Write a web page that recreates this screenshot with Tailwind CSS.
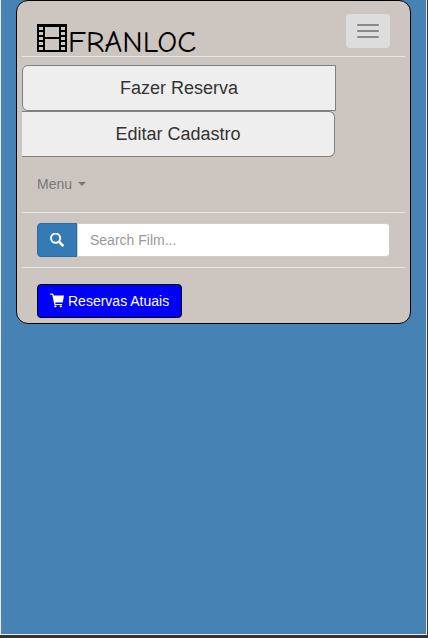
<!DOCTYPE html>
<html lang="pt">
<head>
<meta charset="utf-8">
<meta name="viewport" content="width=device-width, initial-scale=1">
<title>Franloc</title>
<script src="https://cdn.jsdelivr.net/npm/@tailwindcss/browser@4"></script>
</head>
<body class="flex min-h-screen flex-col bg-[#333333] pb-[3px] pr-px font-['Liberation_Sans',Arial,sans-serif] text-sm leading-5 text-[#333]">
<main class="flex-1 border border-t-0 border-[#f0ebe8] bg-[#4682b4] px-[15px]">
  <nav class="rounded-xl border border-black bg-[#cdc5bf] px-[5px] pb-[5px]">
    <div class="flex h-[55px] items-start justify-between px-[15px] pt-[13px]">
      <a href="#" class="flex items-start gap-px pt-2.5 text-black">
        <svg class="h-7 w-[30px]" viewBox="0 0 30 28" aria-hidden="true">
          <path fill="currentColor" fill-rule="evenodd" d="M0 0h30v28H0zM2 3v3h4V3zM2 8v3h4V8zM2 13v3h4v-3zM2 18v3h4v-3zM2 23v3h4v-3zM24 3v3h4V3zM24 8v3h4V8zM24 13v3h4v-3zM24 18v3h4v-3zM24 23v3h4v-3zM8 3v10h14V3zM8 15v11h14V15z"/>
        </svg>
        <span class="pt-1 font-['Comic_Sans_MS','Comic_Neue','DejaVu_Sans',sans-serif] text-[31px] leading-7">FRANLOC</span>
      </a>
      <button type="button" aria-label="Alternar menu" class="flex h-[34px] w-11 flex-col items-center justify-center gap-1 rounded bg-[#ddd]">
        <span class="h-0.5 w-[22px] rounded-[1px] bg-[#888]"></span>
        <span class="h-0.5 w-[22px] rounded-[1px] bg-[#888]"></span>
        <span class="h-0.5 w-[22px] rounded-[1px] bg-[#888]"></span>
      </button>
    </div>
    <div class="border-t border-[#e7e7e7] pt-2">
      <div class="flex w-[82%] flex-col">
        <button type="button" class="h-[46px] rounded-l-md border border-[#808080] bg-[#eee] text-lg">Fazer Reserva</button>
        <button type="button" class="mr-px h-[46px] rounded-r-md border border-l-0 border-[#808080] bg-[#eee] text-lg">Editar Cadastro</button>
      </div>
      <a href="#" class="flex items-center gap-1.5 px-[15px] pt-[17px] pb-[18px] text-[#777]">Menu
        <svg class="h-1 w-2" viewBox="0 0 8 4" aria-hidden="true"><path fill="currentColor" d="M0 0h8L4 4z"/></svg>
      </a>
    </div>
    <form class="flex border-y border-[#e7e7e7] px-[15px] py-2.5">
      <button type="submit" aria-label="Buscar" class="flex h-[34px] w-10 items-center justify-center rounded-l border border-[#2e6da4] bg-[#337ab7] text-white">
        <svg class="size-3.5" viewBox="0 0 14 14" fill="none" stroke="currentColor" aria-hidden="true"><circle cx="5.6" cy="5.2" r="4.6" stroke-width="2"/><path d="M9.2 8.8l3.4 3.6" stroke-width="2.6" stroke-linecap="round"/></svg>
      </button>
      <input type="text" aria-label="Search Film" placeholder="Search Film..." class="h-[34px] min-w-0 flex-1 rounded-r border border-[#ccc] bg-white px-3 placeholder:text-[#999]">
    </form>
    <div class="px-[15px] pt-4">
      <button type="button" class="flex h-[34px] items-center gap-1 rounded border border-black bg-[#00f] px-3 text-white">
        <svg class="size-3.5 overflow-visible" viewBox="0 0 14 14" fill="currentColor" aria-hidden="true"><path d="M.5-.5h2.2q.4 0 .5.4l.6 1.6H14l-1.2 6.5q-.1.5-.6.5H5.2l.3 1.5h6.2q.5 0 .5.5t-.5.5H4.9q-.5 0-.6-.5L2.3.8H.5Q0 .8 0 .2t.5-.7z"/><rect x="4.2" y="11.5" width="2.4" height="1.8" rx=".8"/><rect x="9.6" y="11.5" width="2.4" height="1.8" rx=".8"/></svg>
        Reservas Atuais
      </button>
    </div>
  </nav>
</main>
</body>
</html>
